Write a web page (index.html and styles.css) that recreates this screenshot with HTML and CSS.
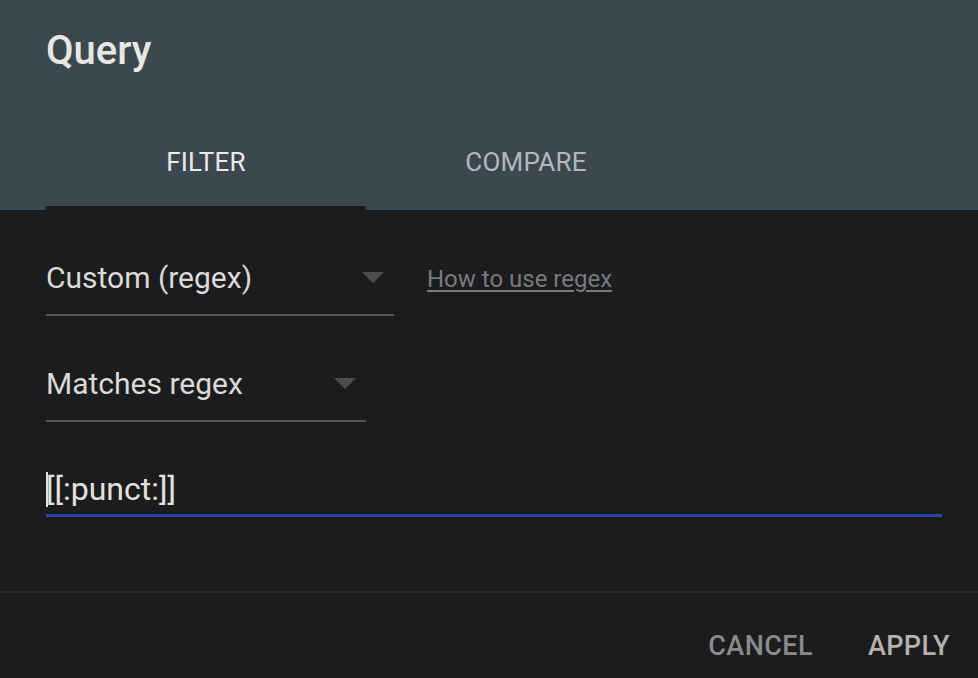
FILE: index.html
```html
<!DOCTYPE html>
<html>
<head>
<meta charset="utf-8">
<link rel="stylesheet" href="styles.css">
</head>
<body>
<div class="dialog">
  <div class="header">
    <div class="title">Query</div>
    <div class="tabs">
      <div class="tab active">FILTER</div>
      <div class="tab">COMPARE</div>
    </div>
  </div>
  <div class="content">
    <div class="row">
      <div class="select wide">
        <span class="value">Custom (regex)</span>
        <span class="caret"></span>
      </div>
      <a class="link" href="#">How to use regex</a>
    </div>
    <div class="row second">
      <div class="select narrow">
        <span class="value">Matches regex</span>
        <span class="caret"></span>
      </div>
    </div>
    <div class="input"><span class="cursor"></span>[[:punct:]]</div>
  </div>
  <div class="footer">
    <span class="btn cancel">CANCEL</span>
    <span class="btn apply">APPLY</span>
  </div>
</div>
</body>
</html>
```
FILE: styles.css
```css
html, body {
  margin: 0;
  padding: 0;
  background: #1b1c1e;
  font-family: Roboto, "Liberation Sans", sans-serif;
}
.dialog {
  width: 978px;
  height: 678px;
  display: flex;
  flex-direction: column;
  background: #1b1c1e;
  overflow: hidden;
}
.header {
  background: #3b4850;
  height: 210px;
  padding-left: 46px;
  box-sizing: border-box;
  display: flex;
  flex-direction: column;
}
.title {
  color: #e9e7e3;
  font-size: 40px;
  font-weight: 500;
  line-height: 48px;
  margin-top: 27px;
}
.tabs {
  display: flex;
  margin-top: auto;
  height: 96px;
}
.tab {
  width: 320px;
  display: flex;
  align-items: center;
  justify-content: center;
  font-size: 26px;
  color: #b4b8ba;
  box-sizing: border-box;
  border-bottom: 4px solid transparent;
  padding-top: 4px;
  letter-spacing: 0.2px;
}
.tab.active {
  color: #ecebe8;
  border-bottom-color: #1b1c1e;
}
.content {
  padding: 35px 36px 0 46px;
  flex: 1;
  border-bottom: 2px solid #2a2b2d;
}
.row {
  display: flex;
  align-items: center;
}
.row.second {
  margin-top: 35px;
}
.select {
  box-sizing: border-box;
  height: 71px;
  padding: 14px 10px 17px 0;
  border-bottom: 2px solid #58585a;
  display: flex;
  align-items: center;
  justify-content: space-between;
}
.select.wide { width: 348px; }
.select.narrow { width: 320px; }
.value {
  font-size: 30px;
  line-height: 38px;
  color: #dcdad6;
}
.caret {
  width: 0;
  height: 0;
  border-left: 11px solid transparent;
  border-right: 11px solid transparent;
  border-top: 11px solid #4e4c48;
  margin-top: -2px;
}
.link {
  margin-left: 33px;
  margin-top: -3px;
  font-size: 24px;
  color: #7a7a7a;
  text-decoration: underline;
  text-underline-offset: 3px;
  text-decoration-thickness: 2px;
}
.input {
  margin-top: 23px;
  height: 72px;
  box-sizing: border-box;
  padding: 25px 0 6px 0;
  border-bottom: 3px solid #2546a2;
  font-size: 32px;
  line-height: 38px;
  color: #e4e2de;
  position: relative;
}
.cursor {
  display: inline-block;
  width: 2px;
  height: 35px;
  background: #e4e2de;
  vertical-align: -7px;
  margin-right: -2px;
}
.footer {
  height: 85px;
  display: flex;
  justify-content: flex-end;
  align-items: center;
  padding-right: 28px;
  padding-top: 20px;
  box-sizing: border-box;
}
.btn {
  font-size: 27px;
  font-weight: 500;
  letter-spacing: 0.4px;
}
.cancel {
  color: #8a8a88;
  margin-right: 55px;
}
.apply {
  color: #b6b1a9;
}
```
